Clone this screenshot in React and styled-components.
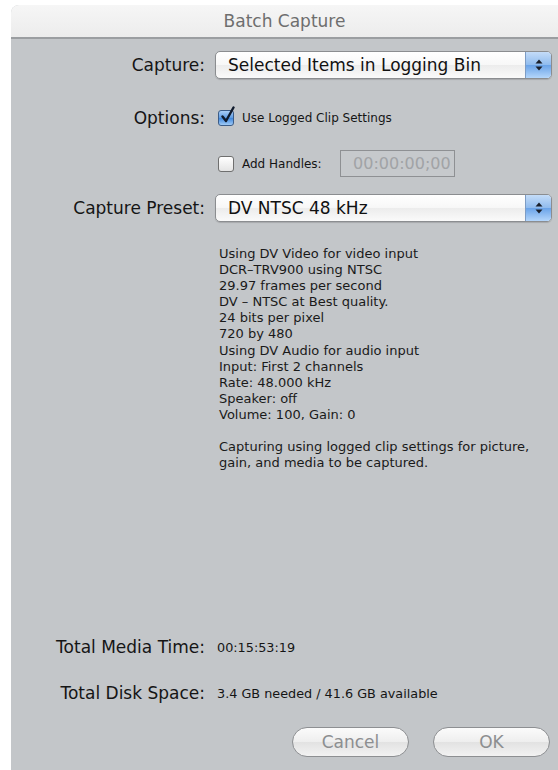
import React from "react";
import styled, { createGlobalStyle, css } from "styled-components";

const Global = createGlobalStyle`
  html, body { margin: 0; padding: 0; background: #ffffff; }
  body { font-family: "DejaVu Sans", "Liberation Sans", sans-serif; color: #111; }
`;

const Window = styled.div`
  margin: 5px 0 0 11px;
  height: 765px;
  display: flex;
  flex-direction: column;
  background: #c3c6c9;
  border-top-left-radius: 8px;
  overflow: hidden;
`;

const TitleBar = styled.div`
  height: 32px;
  flex: none;
  display: flex;
  align-items: center;
  justify-content: center;
  background: linear-gradient(#f6f6f6, #ececec);
  border-bottom: 2px solid #9b9ea1;
  font-size: 17px;
  color: #6e6e6e;
`;

const Body = styled.div`
  flex: 1;
  display: flex;
  flex-direction: column;
  padding: 12px 6px 13px 0;
`;

const Form = styled.div`
  display: grid;
  grid-template-columns: 194px 1fr;
  column-gap: 10px;
  align-items: center;
`;

const Label = styled.div`
  text-align: right;
  font-size: 17px;
  color: #151515;
  white-space: nowrap;
  margin-top: ${(p) => p.$top || 0}px;
`;

const Cell = styled.div`
  display: flex;
  align-items: center;
  gap: 8px;
  margin-top: ${(p) => p.$top || 0}px;
  margin-left: ${(p) => p.$indent || 0}px;
  min-height: ${(p) => p.$h || 0}px;
`;

const Popup = styled.div`
  flex: 1;
  height: 28px;
  box-sizing: border-box;
  display: flex;
  border: 1px solid #8b8d90;
  border-radius: 5px;
  overflow: hidden;
  background: linear-gradient(#ffffff 0%, #f7f7f7 50%, #ececec 51%, #fafafa 100%);
  box-shadow: 0 1px 1px rgba(0, 0, 0, 0.15);
`;

const PopupText = styled.div`
  flex: 1;
  display: flex;
  align-items: center;
  padding-left: 12px;
  font-size: 17px;
  color: #111;
  white-space: nowrap;
`;

const PopupArrows = styled.div`
  width: 25px;
  display: flex;
  align-items: center;
  justify-content: center;
  border-left: 1px solid #7d9cc4;
  background: linear-gradient(#c4dcf8 0%, #8fbbee 50%, #6aa3e8 51%, #b4d6fb 100%);
`;

const Check = styled.span`
  width: 16px;
  height: 16px;
  flex: none;
  box-sizing: border-box;
  border: 1px solid #6f6f6f;
  border-radius: 3px;
  position: relative;
  ${(p) =>
    p.$on
      ? css`
          background: linear-gradient(#a9cdf5 0%, #5d9be3 50%, #3e86dc 51%, #9fcaf6 100%);
          border-color: #3b5c88;
        `
      : css`
          background: linear-gradient(#ffffff, #e4e4e4);
        `}
  & > svg {
    position: absolute;
    left: 1px;
    top: -5px;
  }
`;

const SmallText = styled.span`
  font-size: 12px;
  color: #151515;
  white-space: nowrap;
`;

const TimeField = styled.div`
  width: 115px;
  height: 27px;
  box-sizing: border-box;
  margin-left: 10px;
  border: 1px solid #8e9093;
  background: #c6c9cc;
  color: #a1a3a6;
  font-size: 16px;
  display: flex;
  align-items: center;
  justify-content: flex-end;
  padding-right: 3px;
`;

const Info = styled.div`
  grid-column: 2;
  margin-top: 24px;
  padding-left: 4px;
  font-size: 13px;
  line-height: 16.1px;
  color: #1a1a1a;
  white-space: pre-line;
`;

const Spacer = styled.div`
  flex: 1;
`;

const Totals = styled.div`
  display: grid;
  grid-template-columns: 194px 1fr;
  column-gap: 10px;
  row-gap: 26px;
  align-items: center;
`;

const Value = styled.div`
  font-size: 12.8px;
  color: #151515;
  padding-left: 2px;
`;

const Buttons = styled.div`
  display: flex;
  justify-content: flex-end;
  gap: 24px;
  margin-top: 24px;
  padding-right: 2px;
`;

const Pill = styled.div`
  width: 117px;
  height: 30px;
  box-sizing: border-box;
  border: 1px solid #8d8f92;
  border-radius: 15px;
  background: linear-gradient(#fbfbfb 0%, #eeeeee 50%, #e2e2e2 51%, #f2f2f2 100%);
  display: flex;
  align-items: center;
  justify-content: center;
  font-size: 17px;
  color: #8c8e90;
`;

const Arrows = () => (
  <svg width="10" height="14" viewBox="0 0 10 14">
    <path d="M5 1.5 L8.5 5.5 H1.5 Z" fill="#1a1f2a" />
    <path d="M5 12.5 L8.5 8.5 H1.5 Z" fill="#1a1f2a" />
  </svg>
);

const Tick = () => (
  <svg width="16" height="18" viewBox="0 0 16 18">
    <path
      d="M2.5 10.5 L6 15 L13.5 1.5"
      fill="none"
      stroke="#0f1a2c"
      strokeWidth="2.4"
      strokeLinecap="round"
      strokeLinejoin="round"
    />
  </svg>
);

const infoLines = `Using DV Video for video input
DCR–TRV900 using NTSC
29.97 frames per second
DV – NTSC at Best quality.
24 bits per pixel
720 by 480
Using DV Audio for audio input
Input: First 2 channels
Rate: 48.000 kHz
Speaker: off
Volume: 100, Gain: 0

Capturing using logged clip settings for picture,
gain, and media to be captured.`;

export default function App() {
  return (
    <>
      <Global />
      <Window>
        <TitleBar>Batch Capture</TitleBar>
        <Body>
          <Form>
            <Label>Capture:</Label>
            <Cell>
              <Popup>
                <PopupText>Selected Items in Logging Bin</PopupText>
                <PopupArrows>
                  <Arrows />
                </PopupArrows>
              </Popup>
            </Cell>

            <Label $top={29}>Options:</Label>
            <Cell $top={29} $h={20} $indent={3}>
              <Check $on>
                <Tick />
              </Check>
              <SmallText>Use Logged Clip Settings</SmallText>
            </Cell>

            <div />
            <Cell $top={22} $indent={3}>
              <Check />
              <SmallText>Add Handles:</SmallText>
              <TimeField>00:00:00;00</TimeField>
            </Cell>

            <Label $top={17}>Capture Preset:</Label>
            <Cell $top={17}>
              <Popup>
                <PopupText>DV NTSC 48 kHz</PopupText>
                <PopupArrows>
                  <Arrows />
                </PopupArrows>
              </Popup>
            </Cell>

            <Info>{infoLines}</Info>
          </Form>

          <Spacer />

          <Totals>
            <Label>Total Media Time:</Label>
            <Value>00:15:53:19</Value>
            <Label>Total Disk Space:</Label>
            <Value>3.4 GB needed / 41.6 GB available</Value>
          </Totals>

          <Buttons>
            <Pill>Cancel</Pill>
            <Pill>OK</Pill>
          </Buttons>
        </Body>
      </Window>
    </>
  );
}
